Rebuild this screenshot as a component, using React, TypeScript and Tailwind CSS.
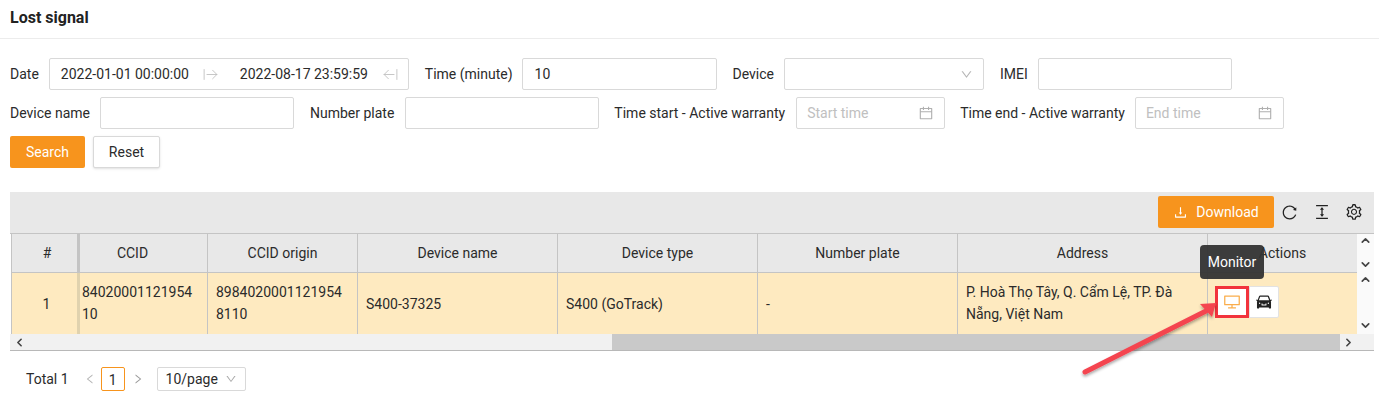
import type { ReactNode } from "react";
import { ArrowRightFromLine, ArrowLeftFromLine, ChevronDown, ChevronLeft, ChevronRight, ChevronUp } from "lucide-react";
import {
  AiFillCar,
  AiOutlineCalendar,
  AiOutlineColumnHeight,
  AiOutlineDesktop,
  AiOutlineDown,
  AiOutlineDownload,
  AiOutlineLeft,
  AiOutlineReload,
  AiOutlineRight,
  AiOutlineSetting,
} from "react-icons/ai";

const font = "font-['Roboto','Liberation_Sans',sans-serif]";

const Label = ({ children }: { children: string }) => (
  <span className="text-sm text-[#2b2b2b] whitespace-nowrap mr-[10px]">{children}</span>
);

const Box = ({ w, children }: { w: string; children?: ReactNode }) => (
  <div className={`${w} h-8 bg-white border border-[#d9d9d9] rounded-[2px] flex items-center text-sm text-[#2b2b2b] shrink-0`}>
    {children}
  </div>
);

const DateBox = ({ text }: { text: string }) => (
  <Box w="w-[149px]">
    <span className="ml-[10px] text-[#c0c0c0] flex-1">{text}</span>
    <AiOutlineCalendar size={16} className="mr-[10px] text-[#b0b0b0]" />
  </Box>
);

const columns = [
  { name: "#", w: "w-[68px]", extra: "border-r-[3px] pl-[5px]" },
  { name: "CCID", w: "w-[128px]", extra: "pr-[22px]" },
  { name: "CCID origin", w: "w-[150px]", extra: "" },
  { name: "Device name", w: "w-[200px]", extra: "" },
  { name: "Device type", w: "w-[200px]", extra: "" },
  { name: "Number plate", w: "w-[200px]", extra: "" },
  { name: "Address", w: "w-[250px]", extra: "" },
];

const App = () => {
  return (
    <div className={`${font} w-[1379px] h-[419px] bg-white overflow-hidden relative text-sm text-[#2b2b2b]`}>
      <div className="h-[39px] border-b border-[#ececec] pl-[10px] flex items-center pb-[3px]">
        <h1 className="text-base font-bold text-[#222]">Lost signal</h1>
      </div>

      <div className="pl-[10px] pt-[19px] flex flex-col gap-[7px]">
        <div className="flex items-center h-8">
          <Label>Date</Label>
          <Box w="w-[360px]">
            <span className="ml-[11px] w-[141px]">2022-01-01 00:00:00</span>
            <ArrowRightFromLine size={17} strokeWidth={1.2} className="text-[#bdbdbd]" />
            <span className="ml-[21px] w-[142px]">2022-08-17 23:59:59</span>
            <ArrowLeftFromLine size={17} strokeWidth={1.2} className="text-[#bdbdbd]" />
          </Box>
          <span className="ml-4"><Label>Time (minute)</Label></span>
          <div className="-ml-px"><Box w="w-[195px]"><span className="ml-[12px]">10</span></Box></div>
          <span className="ml-4"><Label>Device</Label></span>
          <Box w="w-[200px]">
            <span className="flex-1" />
            <AiOutlineDown size={13} className="mr-[10px] text-[#b5b5b5]" />
          </Box>
          <span className="ml-4"><Label>IMEI</Label></span>
          <Box w="w-[194px]" />
        </div>
        <div className="flex items-center h-8">
          <Label>Device name</Label>
          <Box w="w-[194px]" />
          <span className="ml-4"><Label>Number plate</Label></span>
          <div className="ml-px"><Box w="w-[194px]" /></div>
          <span className="ml-[15px]"><Label>Time start - Active warranty</Label></span>
          <div className="ml-px"><DateBox text="Start time" /></div>
          <span className="ml-[15px]"><Label>Time end - Active warranty</Label></span>
          <DateBox text="End time" />
        </div>
        <div className="flex gap-2">
          <button className="w-[75px] h-8 bg-[#f7941d] text-white rounded-[2px] text-sm">Search</button>
          <button className="w-[67px] h-8 bg-white border border-[#d9d9d9] rounded-[2px] text-sm shadow-sm">Reset</button>
        </div>
      </div>

      <div className="ml-[10px] mt-[24px] w-[1364px]">
        <div className="h-[41px] bg-[#e8e8e8] flex items-center justify-end pr-[11px] pb-px">
          <button className="w-[116px] h-8 bg-[#f7941d] text-white rounded-[2px] flex items-center justify-center gap-2 text-sm">
            <AiOutlineDownload size={15} />
            Download
          </button>
          <AiOutlineReload size={17} className="ml-[7px] text-[#222]" />
          <AiOutlineColumnHeight size={18} className="ml-[15px] text-[#222]" />
          <AiOutlineSetting size={18} className="ml-[14px] text-[#222]" />
        </div>

        <div className="flex border-t border-[#c4c4c4]">
          <div className="flex-1 min-w-0 overflow-hidden ml-px border-l border-[#c4c4c4]">
            <div className="flex h-[39px] bg-[#e8e8e8] border-b border-[#c4c4c4]">
              {columns.map((c) => (
                <div key={c.name} className={`${c.w} shrink-0 flex items-center justify-center border-r border-[#c4c4c4] ${c.extra}`}>
                  {c.name}
                </div>
              ))}
              <div className="flex-1 flex items-center justify-center">Actions</div>
            </div>
            <div className="flex h-[61px] bg-[#feeac0] leading-[22px]">
              <div className="w-[68px] shrink-0 flex items-center justify-center pl-[4px] border-r-[3px] border-[#e0d2ae]">1</div>
              <div className="w-[128px] shrink-0 flex items-center pl-[2px] pb-[2px] border-r border-[#c4c4c4]">
                <span>84020001121954<br />10</span>
              </div>
              <div className="w-[150px] shrink-0 flex items-center pl-2 pb-[2px] border-r border-[#c4c4c4]">
                <span>8984020001121954<br />8110</span>
              </div>
              <div className="w-[200px] shrink-0 flex items-center pl-2 border-r border-[#c4c4c4]">S400-37325</div>
              <div className="w-[200px] shrink-0 flex items-center pl-2 border-r border-[#c4c4c4]">S400 (GoTrack)</div>
              <div className="w-[200px] shrink-0 flex items-center pl-2 border-r border-[#c4c4c4]">-</div>
              <div className="w-[250px] shrink-0 flex items-center pl-2 pb-[2px] border-r border-[#c4c4c4]">
                <span>P. Hoà Thọ Tây, Q. Cẩm Lệ, TP. Đà<br />Nẵng, Việt Nam</span>
              </div>
              <div className="flex-1 flex items-center pl-[7px] pb-1">
                <div className="w-[34px] h-8 bg-white flex items-center justify-center text-[#faad4c] border-[3px] border-[#f2333c]">
                  <AiOutlineDesktop size={18} />
                </div>
                <div className="w-[30px] h-8 bg-white flex items-center justify-center text-[#222] border border-[#e2e2e2] rounded-r-[2px]">
                  <AiFillCar size={18} />
                </div>
              </div>
            </div>
          </div>
          <div className="w-[17px] shrink-0 flex flex-col bg-[#fafafa] text-[#444]">
            <div className="h-[39px] flex flex-col items-center justify-between pb-[2px]">
              <ChevronUp size={13} strokeWidth={3} />
              <ChevronDown size={13} strokeWidth={3} />
            </div>
            <div className="h-[61px] flex flex-col items-center justify-between pb-[2px]">
              <ChevronUp size={13} strokeWidth={3} />
              <ChevronDown size={13} strokeWidth={3} />
            </div>
          </div>
        </div>

        <div className="h-[17px] flex items-center bg-[#f1f1f1] border-b border-[#b8b8b8] text-[#444]">
          <ChevronLeft size={13} strokeWidth={3} className="ml-[3px]" />
          <div className="ml-[586px] w-[728px] h-full bg-[#c9c9c9]" />
          <ChevronRight size={13} strokeWidth={3} className="ml-[2px]" />
        </div>
      </div>

      <div className="pl-[26px] mt-4 flex items-center h-6">
        <span>Total 1</span>
        <AiOutlineLeft size={12} className="ml-[15px] text-[#b5b5b5]" />
        <div className="ml-[5px] w-6 h-6 border border-[#f7941d] rounded-[2px] flex items-center justify-center pt-px">1</div>
        <AiOutlineRight size={12} className="ml-[7px] text-[#999]" />
        <div className="ml-[13px] w-[89px] h-6 border border-[#d9d9d9] rounded-[2px] flex items-center pl-2">
          10/page
          <AiOutlineDown size={12} className="ml-[7px] text-[#aaa]" />
        </div>
      </div>

      <div className="absolute left-[1200px] top-[245px] w-[64px] h-[34px] rounded-[4px] bg-[#333]/95 text-white flex items-center justify-center">
        Monitor
      </div>

      <svg className="absolute left-[1080px] top-[300px]" width="140" height="80" viewBox="0 0 140 80">
        <defs>
          <filter id="arrowShadow" x="-10%" y="-20%" width="120%" height="150%">
            <feDropShadow dx="0" dy="2" stdDeviation="1.5" floodColor="#000" floodOpacity="0.35" />
          </filter>
        </defs>
        <g filter="url(#arrowShadow)">
          <path d="M5 72 L126 11" stroke="#f44450" strokeWidth="5" strokeLinecap="round" fill="none" />
          <path d="M136 3 L120 4 L132 17 Z" fill="#f44450" />
        </g>
      </svg>
    </div>
  );
};

export default App;
